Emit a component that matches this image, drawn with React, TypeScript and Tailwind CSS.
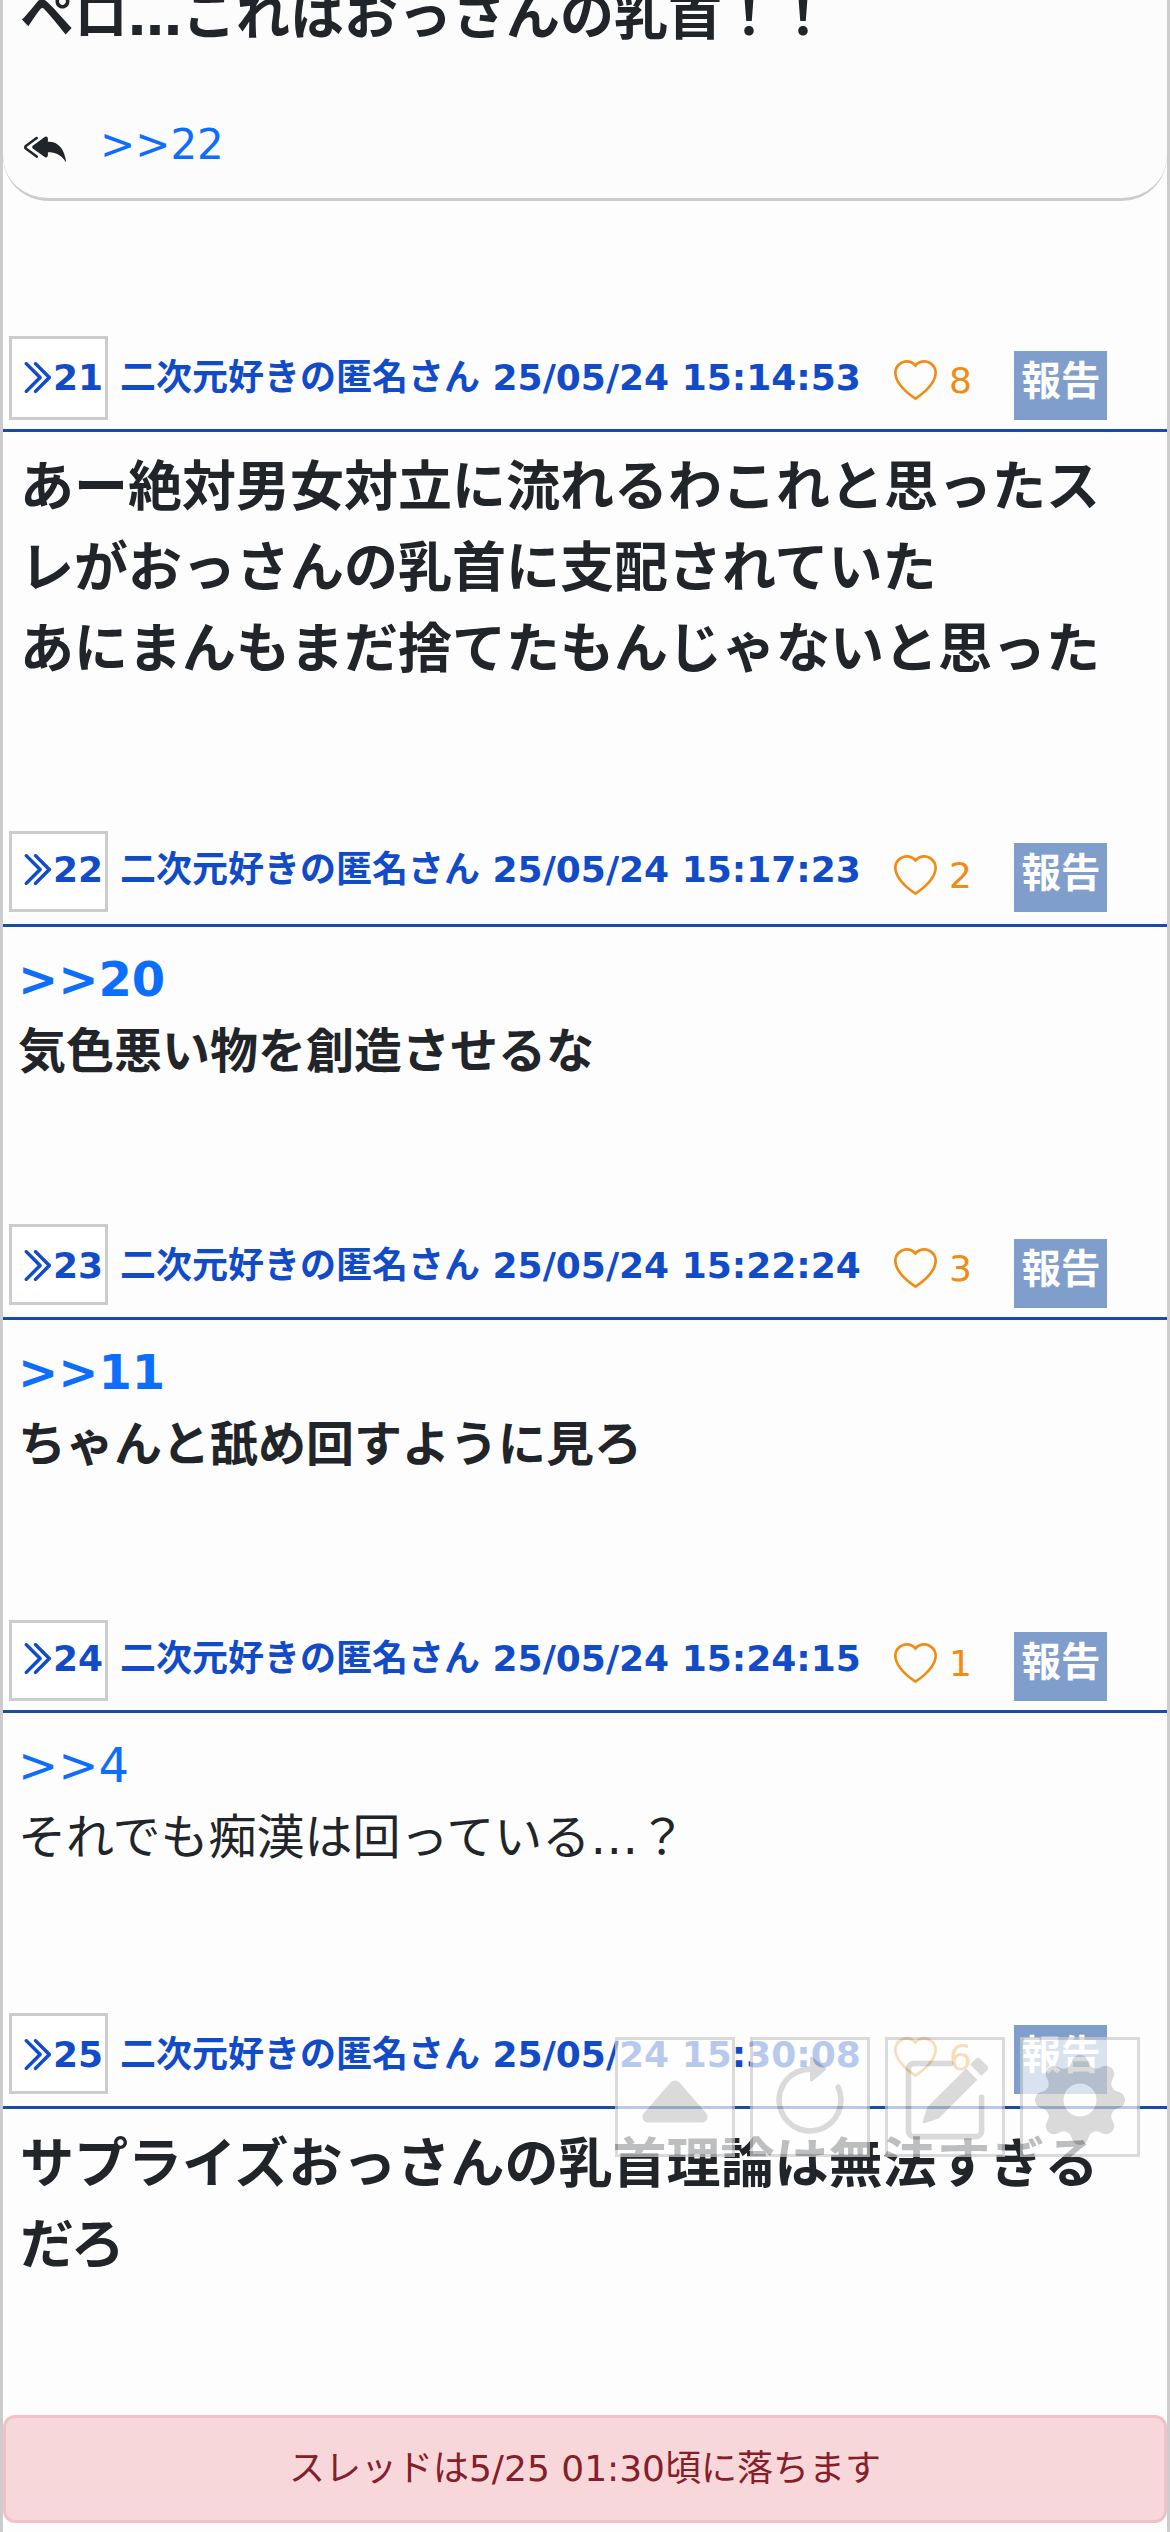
import type { ReactNode } from "react";
import {
  BsArrowClockwise,
  BsCaretUpFill,
  BsChevronDoubleRight,
  BsGearFill,
  BsHeart,
  BsPencilSquare,
  BsReplyAllFill,
} from "react-icons/bs";

type Post = {
  id: number;
  time: string;
  likes: number;
  header: string;
  box: string;
  name: string;
  heart: string;
  report: string;
  body: string;
  content: ReactNode;
};

const posts: Post[] = [
  {
    id: 21,
    time: "15:14:53",
    likes: 8,
    header: "h-[96px]",
    box: "h-[84px] pt-[12px]",
    name: "mt-[15px]",
    heart: "mt-[24px]",
    report: "mt-[15px]",
    body: "h-[399px] pt-[15px] pl-[17px] text-[54px] font-bold",
    content: (
      <>
        <p>あー絶対男女対立に流れるわこれと思ったスレがおっさんの乳首に支配されていた</p>
        <p>あにまんもまだ捨てたもんじゃないと思った</p>
      </>
    ),
  },
  {
    id: 22,
    time: "15:17:23",
    likes: 2,
    header: "h-[96px]",
    box: "h-[81px] pt-[9px]",
    name: "mt-[12px]",
    heart: "mt-[24px]",
    report: "mt-[12px]",
    body: "h-[297px] pt-[16px] pl-[15px] text-[48px] font-bold",
    content: (
      <>
        <p className="text-[#0d6efd]">&gt;&gt;20</p>
        <p>気色悪い物を創造させるな</p>
      </>
    ),
  },
  {
    id: 23,
    time: "15:22:24",
    likes: 3,
    header: "h-[96px]",
    box: "h-[81px] pt-[12px]",
    name: "mt-[15px]",
    heart: "mt-[24px]",
    report: "mt-[15px]",
    body: "h-[300px] pt-[16px] pl-[15px] text-[48px] font-bold",
    content: (
      <>
        <p className="text-[#0d6efd]">&gt;&gt;11</p>
        <p>ちゃんと舐め回すように見ろ</p>
      </>
    ),
  },
  {
    id: 24,
    time: "15:24:15",
    likes: 1,
    header: "h-[93px]",
    box: "h-[81px] pt-[9px]",
    name: "mt-[12px]",
    heart: "mt-[23px]",
    report: "mt-[12px]",
    body: "h-[300px] pt-[16px] pl-[15px] text-[48px]",
    content: (
      <>
        <p className="text-[#0d6efd]">&gt;&gt;4</p>
        <p>それでも痴漢は回っている…？</p>
      </>
    ),
  },
  {
    id: 25,
    time: "15:30:08",
    likes: 6,
    header: "h-[96px]",
    box: "h-[81px] pt-[12px]",
    name: "mt-[15px]",
    heart: "mt-[24px]",
    report: "mt-[12px]",
    body: "h-[306px] pt-[15px] pl-[17px] text-[54px] font-bold",
    content: <p>サプライズおっさんの乳首理論は無法すぎるだろ</p>,
  },
];

function PostItem({ post }: { post: Post }) {
  return (
    <article>
      <header
        className={`flex items-start border-b-[3px] border-[#1a4ca5] pl-[6px] text-[36px] leading-[54px] ${post.header}`}
      >
        <div
          className={`flex w-[99px] shrink-0 items-start border-[3px] border-[#ccc] bg-white pl-[5px] font-bold text-[#114bc8] ${post.box}`}
        >
          <BsChevronDoubleRight className="mt-[8px] size-[37px] shrink-0" stroke="currentColor" strokeWidth={0.5} />
          <span className="-ml-px">{post.id}</span>
        </div>
        <div className={`ml-[12px] w-[773px] shrink-0 font-bold whitespace-nowrap text-[#114bc8] ${post.name}`}>
          二次元好きの匿名さん 25/05/24 {post.time}
        </div>
        <div className={`flex w-[121px] shrink-0 items-start text-[#f08c14] ${post.heart}`}>
          <BsHeart className="ml-px size-[43px] shrink-0" />
          <span className="mt-[-6px] ml-[12px]">{post.likes}</span>
        </div>
        <button
          className={`h-[69px] w-[93px] shrink-0 bg-[#809ecc] pl-px text-center text-[39.5px] leading-[60px] font-bold whitespace-nowrap text-white ${post.report}`}
        >
          <span className="block h-full">報告</span>
        </button>
      </header>
      <div className={`pr-[50px] leading-[1.5] text-[#212529] ${post.body}`}>{post.content}</div>
    </article>
  );
}

const tools = [BsCaretUpFill, BsArrowClockwise, BsPencilSquare, BsGearFill];

export default function App() {
  return (
    <main
      lang="ja"
      className="relative h-[2532px] w-[1170px] overflow-hidden border-x-[3px] border-[#ccc] bg-[#fdfdfd] font-['DejaVu_Sans','Noto_Sans_CJK_JP',sans-serif]"
    >
      <section className="mb-[135px] flow-root h-[201px] rounded-b-[45px] border-b-[3px] border-[#ccc] bg-[#fcfcfc]">
        <p className="-mt-[24px] pl-[17px] text-[54px] leading-[81px] font-bold text-[#212529]">
          ペロ…これはおっさんの乳首！！
        </p>
        <div className="mt-[56px] flex items-center pl-[21px] text-[42px] leading-[63px]">
          <BsReplyAllFill className="mt-[4px] size-[42px] text-[#212529]" />
          <a className="ml-[34px] text-[#0d6efd]">&gt;&gt;22</a>
        </div>
      </section>

      {posts.map((post) => (
        <PostItem key={post.id} post={post} />
      ))}

      <div className="h-[108px] rounded-[12px] border-[3px] border-[#f1c1c8] bg-[#f8d7da] pt-[24px] text-center text-[36px] leading-[54px] text-[#842029]">
        スレッドは5/25 01:30頃に落ちます
      </div>

      <nav className="absolute top-[2037px] right-[27px] flex gap-[15px]">
        {tools.map((Icon, i) => (
          <button
            key={i}
            className="flex size-[120px] justify-center border-[3px] border-[#ccc] bg-white pt-[15px] text-[#ccc] opacity-70"
          >
            <Icon className="size-[90px]" />
          </button>
        ))}
      </nav>
    </main>
  );
}
